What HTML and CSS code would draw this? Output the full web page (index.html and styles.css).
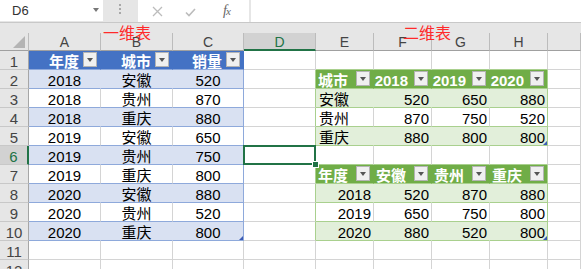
FILE: index.html
```html
<!DOCTYPE html>
<html lang="zh-CN">
<head>
<meta charset="utf-8">
<title>一维表 / 二维表</title>
<link rel="stylesheet" href="styles.css">
</head>
<body>
<div class="fbar">
  <div class="namebox"><span>D6</span><span class="nb-arrow"></span></div>
  <div class="grip-dots"><svg width="3" height="12" viewBox="0 0 3 12"><rect x="0" y="0" width="2" height="2"/><rect x="0" y="4" width="2" height="2"/><rect x="0" y="8" width="2" height="2"/></svg></div>
  <div class="fxbox">
    <svg class="ico-x" width="11" height="11" viewBox="0 0 11 11"><path d="M1 1 L10 10 M10 1 L1 10"/></svg>
    <svg class="ico-ok" width="11" height="9" viewBox="0 0 11 9"><path d="M1 4.5 L4 7.5 L10 1"/></svg>
    <span class="fx"><i>f</i><i class="fxx">x</i></span>
  </div>
  <div class="finput"></div>
</div>

<div class="sheet">
  <div class="corner"><svg width="12" height="12" viewBox="0 0 12 12"><path d="M12 0 L12 12 L0 12 Z"/></svg></div>
  <div class="ch">A</div><div class="ch">B</div><div class="ch">C</div><div class="ch sel">D</div><div class="ch">E</div><div class="ch">F</div><div class="ch">G</div><div class="ch">H</div><div class="ch"></div>

  <!-- row 1 -->
  <div class="rh">1</div>
  <div class="c t1h"><span>年度</span><span class="dd"></span></div>
  <div class="c t1h"><span>城市</span><span class="dd"></span></div>
  <div class="c t1h"><span>销量</span><span class="dd"></span></div>
  <div class="c"></div>
  <div class="c gtop"></div><div class="c gtop"></div><div class="c gtop"></div><div class="c gtop"></div><div class="c"></div>

  <!-- row 2 -->
  <div class="rh">2</div>
  <div class="c t1 b1">2018</div><div class="c t1 b1">安徽</div><div class="c t1 b1 t1r">520</div>
  <div class="c gleft"></div>
  <div class="c t2h split"><span>城市</span><span class="dd"></span></div>
  <div class="c t2h"><span>2018</span><span class="dd"></span></div>
  <div class="c t2h"><span>2019</span><span class="dd"></span></div>
  <div class="c t2h t2r"><span>2020</span><span class="dd"></span></div>
  <div class="c"></div>

  <!-- row 3 -->
  <div class="rh">3</div>
  <div class="c t1">2018</div><div class="c t1">贵州</div><div class="c t1 t1r">870</div>
  <div class="c gleft"></div>
  <div class="c t2 b2">安徽</div><div class="c t2 b2 num">520</div><div class="c t2 b2 num">650</div><div class="c t2 b2 t2r num">880</div>
  <div class="c"></div>

  <!-- row 4 -->
  <div class="rh">4</div>
  <div class="c t1 b1">2018</div><div class="c t1 b1">重庆</div><div class="c t1 b1 t1r">880</div>
  <div class="c gleft"></div>
  <div class="c t2">贵州</div><div class="c t2 num">870</div><div class="c t2 num">750</div><div class="c t2 t2r num">520</div>
  <div class="c"></div>

  <!-- row 5 -->
  <div class="rh">5</div>
  <div class="c t1">2019</div><div class="c t1">安徽</div><div class="c t1 t1r">650</div>
  <div class="c gleft"></div>
  <div class="c t2 b2">重庆</div><div class="c t2 b2 num">880</div><div class="c t2 b2 num">800</div><div class="c t2 b2 t2r num grip">800</div>
  <div class="c"></div>

  <!-- row 6 -->
  <div class="rh sel">6</div>
  <div class="c t1 b1">2019</div><div class="c t1 b1">贵州</div><div class="c t1 b1 t1r">750</div>
  <div class="c active"></div>
  <div class="c gtop"></div><div class="c gtop"></div><div class="c gtop"></div><div class="c gtop"></div><div class="c"></div>

  <!-- row 7 -->
  <div class="rh">7</div>
  <div class="c t1">2019</div><div class="c t1">重庆</div><div class="c t1 t1r">800</div>
  <div class="c gleft"></div>
  <div class="c t2h split"><span>年度</span><span class="dd"></span></div>
  <div class="c t2h split"><span>安徽</span><span class="dd"></span></div>
  <div class="c t2h split"><span>贵州</span><span class="dd"></span></div>
  <div class="c t2h t2r split"><span>重庆</span><span class="dd"></span></div>
  <div class="c"></div>

  <!-- row 8 -->
  <div class="rh">8</div>
  <div class="c t1 b1">2020</div><div class="c t1 b1">安徽</div><div class="c t1 b1 t1r">880</div>
  <div class="c gleft"></div>
  <div class="c t2 b2 num">2018</div><div class="c t2 b2 num">520</div><div class="c t2 b2 num">870</div><div class="c t2 b2 t2r num">880</div>
  <div class="c"></div>

  <!-- row 9 -->
  <div class="rh">9</div>
  <div class="c t1">2020</div><div class="c t1">贵州</div><div class="c t1 t1r">520</div>
  <div class="c gleft"></div>
  <div class="c t2 num">2019</div><div class="c t2 num">650</div><div class="c t2 num">750</div><div class="c t2 t2r num">800</div>
  <div class="c"></div>

  <!-- row 10 -->
  <div class="rh">10</div>
  <div class="c t1 b1">2020</div><div class="c t1 b1">重庆</div><div class="c t1 b1 t1r grip">800</div>
  <div class="c gleft"></div>
  <div class="c t2 b2 num">2020</div><div class="c t2 b2 num">880</div><div class="c t2 b2 num">520</div><div class="c t2 b2 t2r num grip">800</div>
  <div class="c"></div>

  <!-- row 11 -->
  <div class="rh">11</div>
  <div class="c"></div><div class="c"></div><div class="c"></div><div class="c"></div><div class="c"></div><div class="c"></div><div class="c"></div><div class="c"></div><div class="c"></div>

  <!-- row 12 -->
  <div class="rh">12</div>
  <div class="c"></div><div class="c"></div><div class="c"></div><div class="c"></div><div class="c"></div><div class="c"></div><div class="c"></div><div class="c"></div><div class="c"></div>
</div>

<div class="note note1">一维表</div>
<div class="note note2">二维表</div>
</body>
</html>
```

FILE: styles.css
```css
html, body {
  margin: 0;
  padding: 0;
}
body {
  width: 581px;
  height: 269px;
  overflow: hidden;
  position: relative;
  background: #e6e6e6;
  font-family: "Liberation Sans", "Noto Sans CJK SC", sans-serif;
  color: #000;
}

/* ---------- formula bar ---------- */
.fbar {
  display: flex;
  height: 22px;
  border-bottom: 1px solid #c8c8c8;
  margin-bottom: 10px;
}
.namebox {
  width: 103px;
  box-sizing: border-box;
  background: #fff;
  display: flex;
  align-items: center;
  justify-content: space-between;
  padding: 0 4px 0 12px;
  font-size: 13px;
  color: #333;
  height: 21px;
}
.nb-arrow {
  width: 0;
  height: 0;
  border-left: 3.5px solid transparent;
  border-right: 3.5px solid transparent;
  border-top: 4px solid #777;
  margin-bottom: 2px;
}
.grip-dots {
  width: 35px;
  display: flex;
  justify-content: center;
  padding-top: 4px;
  box-sizing: border-box;
}
.grip-dots svg {
  fill: #a8a8a8;
}
.fxbox {
  width: 111px;
  background: #fff;
  display: flex;
  align-items: center;
  position: relative;
}
.ico-x {
  margin-left: 14px;
  fill: none;
  stroke: #bcbcbc;
  stroke-width: 1.3;
}
.ico-ok {
  margin-left: 22px;
  margin-top: 2px;
  fill: none;
  stroke: #bcbcbc;
  stroke-width: 1.6;
}
.fx {
  margin-left: 27px;
  font-family: "Liberation Serif", serif;
  font-size: 14px;
  color: #666;
  letter-spacing: -1px;
}
.fxx {
  font-size: 11px;
}
.finput {
  flex: 1;
  margin-left: 2px;
  background: #fff;
}

/* ---------- sheet grid ---------- */
.sheet {
  display: grid;
  grid-template-columns: 29px 72px 72px 71px 72px 58px 58px 58px 58px 1fr;
  grid-template-rows: 18px;
  grid-auto-rows: 19px;
}
.corner {
  background: #e6e6e6;
  border-right: 1px solid #bcbcbc;
  border-bottom: 1px solid #a0a0a0;
  display: flex;
  justify-content: flex-end;
  align-items: flex-end;
  padding: 0 3px 2px 0;
}
.corner svg {
  fill: #b4b4b4;
}
.ch {
  background: #e6e6e6;
  border-right: 1px solid #bcbcbc;
  border-bottom: 1px solid #a0a0a0;
  text-align: center;
  font-size: 14px;
  line-height: 16px;
  padding-top: 1px;
  color: #444;
}
.ch.sel {
  background: #d2d2d2;
  color: #217346;
  border-bottom: 2px solid #217346;
}
.rh {
  background: #e6e6e6;
  border-right: 1px solid #a6a6a6;
  border-bottom: 1px solid #c8c8c8;
  text-align: center;
  font-size: 15px;
  line-height: 15px;
  padding-top: 3px;
  color: #444;
}
.rh.sel {
  background: #d2d2d2;
  color: #217346;
  border-right: 2px solid #217346;
}

.c {
  background: #fff;
  border-right: 1px solid #d4d4d4;
  border-bottom: 1px solid #d4d4d4;
  font-size: 15px;
  line-height: 15px;
  padding: 3px 3px 0 3px;
  white-space: nowrap;
}

/* dropdown button in table headers */
.dd {
  width: 12px;
  height: 13px;
  background: #f0f0f0;
  border: 1px solid #b4b4b4;
  display: flex;
  align-items: center;
  justify-content: center;
  flex: none;
}
.dd::after {
  content: "";
  width: 0;
  height: 0;
  border-left: 3.5px solid transparent;
  border-right: 3.5px solid transparent;
  border-top: 4px solid #555;
}

/* table 1 — blue */
.t1h {
  background: #4472c4;
  border-right-color: #4472c4;
  border-bottom-color: #8ea9db;
  color: #fff;
  font-weight: bold;
  display: flex;
  justify-content: flex-end;
  align-items: flex-start;
  gap: 4px;
  padding: 1px 3px 0 0;
}
.t1h span:first-child {
  padding-top: 2px;
}
.t1 {
  text-align: center;
  border-bottom-color: #8ea9db;
}
.b1 {
  background: #d9e1f2;
  border-right-color: #d9e1f2;
}
.t1r {
  border-right-color: #8ea9db;
}

/* tables 2/3 — green */
.gtop {
  border-bottom-color: #a9d08e;
}
.gleft {
  border-right-color: #a9d08e;
}
.t2h {
  background: #70ad47;
  border-right-color: #70ad47;
  border-bottom-color: #a9d08e;
  color: #fff;
  font-weight: bold;
  display: flex;
  justify-content: flex-end;
  align-items: flex-start;
  gap: 6px;
  padding: 1px 3px 0 2px;
}
.t2h span:first-child {
  padding-top: 2px;
}
.t2h.split {
  justify-content: space-between;
}
.t2 {
  border-bottom-color: #a9d08e;
}
.b2 {
  background: #e2efda;
  border-right-color: #e2efda;
}
.t2r {
  border-right-color: #a9d08e;
}
.num {
  text-align: right;
  padding-right: 2px;
}

/* resize grip at a table's bottom-right corner */
.grip {
  position: relative;
}
.grip::after {
  content: "";
  position: absolute;
  right: 0;
  bottom: 0;
  width: 0;
  height: 0;
  border-left: 4px solid transparent;
  border-bottom: 4px solid #3b5bb5;
}

/* active cell D6 */
.active {
  position: relative;
  z-index: 2;
}
.active::after {
  content: "";
  position: absolute;
  left: -1px;
  top: -1px;
  right: -1px;
  bottom: -1px;
  border: 2px solid #217346;
}
.active::before {
  content: "";
  position: absolute;
  right: -3px;
  bottom: -3px;
  width: 5px;
  height: 5px;
  background: #217346;
  outline: 1px solid #fff;
  z-index: 3;
}

/* red annotations */
.note {
  position: absolute;
  top: 24px;
  font-family: "Noto Sans CJK SC", sans-serif;
  font-size: 16px;
  line-height: 16px;
  color: #ff2a2a;
  z-index: 5;
}
.note1 {
  left: 103px;
}
.note2 {
  left: 403px;
}
```
